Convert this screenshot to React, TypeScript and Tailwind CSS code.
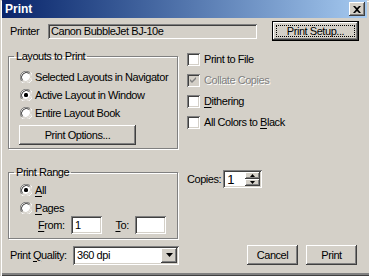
import React from "react";

const raised =
  "shadow-[inset_-1px_-1px_#404040,inset_1px_1px_#ffffff,inset_-2px_-2px_#808080,inset_2px_2px_#d4d0c8]";
const sunken =
  "shadow-[inset_1px_1px_#808080,inset_-1px_-1px_#ffffff,inset_2px_2px_#404040,inset_-2px_-2px_#d4d0c8]";

function U({ children }: { children: React.ReactNode }) {
  return <span className="underline underline-offset-[2px]">{children}</span>;
}

function Radio({ checked }: { checked?: boolean }) {
  return (
    <svg width="12" height="12" viewBox="0 0 12 12" className="shrink-0">
      <circle cx="6" cy="6" r="5" fill="#ffffff" />
      <path d="M1.76 10.24 A6 6 0 0 1 10.24 1.76" stroke="#808080" fill="none" strokeWidth="1" />
      <path d="M10.6 1.4 A6.2 6.2 0 0 1 1.4 10.6" stroke="#ffffff" fill="none" strokeWidth="1" />
      <path d="M2.5 9.5 A5 5 0 0 1 9.5 2.5" stroke="#404040" fill="none" strokeWidth="1" />
      <path d="M9.5 2.5 A5 5 0 0 1 2.5 9.5" stroke="#d4d0c8" fill="none" strokeWidth="1" />
      {checked && <rect x="4" y="4" width="4" height="4" rx="1.5" fill="#000000" />}
    </svg>
  );
}

function Check({ checked, disabled }: { checked?: boolean; disabled?: boolean }) {
  return (
    <div
      className={`w-[13px] h-[13px] shrink-0 ${sunken} ${disabled ? "bg-[#d4d0c8]" : "bg-white"} flex items-center justify-center`}
    >
      {checked && (
        <svg width="7" height="7" viewBox="0 0 7 7">
          <path d="M0 2 L2 4 L6 0 L6 2 L2 6 L0 4 Z" fill={disabled ? "#808080" : "#000000"} />
        </svg>
      )}
    </div>
  );
}

function Button({ children, w, def }: { children: React.ReactNode; w: string; def?: boolean }) {
  if (def) {
    return (
      <div className={`${w} h-[20px] border border-black bg-[#d4d0c8] flex`}>
        <div className={`flex-1 ${raised} flex items-center justify-center p-[3px]`}>
          <div className="w-full h-full border border-dotted border-black flex items-center justify-center">
            {children}
          </div>
        </div>
      </div>
    );
  }
  return (
    <div className={`${w} h-[20px] ${raised} bg-[#d4d0c8] flex items-center justify-center`}>{children}</div>
  );
}

export default function App() {
  return (
    <div className="w-[369px] h-[276px] bg-[#d4d0c8] font-['Liberation_Sans',Arial,sans-serif] text-[11px] leading-[13px] tracking-[-0.45px] whitespace-nowrap text-black shadow-[inset_1px_1px_#d4d0c8,inset_2px_2px_#ffffff,inset_0_-1px_#404040,inset_0_-3px_#808080] overflow-hidden flex flex-col">
      {/* title bar */}
      <div className="h-[18px] mx-[2px] bg-gradient-to-r from-[#0a246a] to-[#a6caf0] flex items-center justify-between pl-[3px] pr-[2px]">
        <span className="text-white font-bold text-[12px] leading-[14px] tracking-normal">Print</span>
        <div className={`w-[16px] h-[14px] bg-[#d4d0c8] ${raised} flex items-center justify-center`}>
          <svg width="8" height="7" viewBox="0 0 8 7">
            <path d="M0 0 L2 0 L4 2 L6 0 L8 0 L5 3.5 L8 7 L6 7 L4 5 L2 7 L0 7 L3 3.5 Z" fill="#000" />
          </svg>
        </div>
      </div>

      {/* printer row */}
      <div className="flex items-center mt-[3px] h-[20px]">
        <span className="ml-[10px] w-[38px]">Printer</span>
        <div className={`w-[209px] h-[15px] ${sunken} bg-[#d4d0c8] flex items-center px-[3px]`}>
          Canon BubbleJet BJ-10e
        </div>
        <div className="ml-[15px]">
          <Button w="w-[87px]" def>
            Print Setup...
          </Button>
        </div>
      </div>

      {/* main */}
      <div className="flex mt-[9px]">
        <div className="ml-[8px] w-[170px] flex flex-col">
          <fieldset className="min-w-0 h-[99px] border border-[#808080] shadow-[inset_1px_1px_#ffffff,1px_1px_#ffffff] px-[11px]">
            <legend className="px-[2px] ml-[-6px] leading-[13px]">Layouts to Print</legend>
            <div className="flex flex-col gap-[6px] mt-[8px]">
              <div className="flex items-center gap-[2px] h-[12px]">
                <Radio />
                <span className="ml-[1px]">Selected Layouts in Navigator</span>
              </div>
              <div className="flex items-center gap-[2px] h-[12px]">
                <Radio checked />
                <span className="ml-[1px]">Active Layout in Window</span>
              </div>
              <div className="flex items-center gap-[2px] h-[12px]">
                <Radio />
                <span className="ml-[1px]">Entire Layout Book</span>
              </div>
            </div>
            <div className="mt-[6px] -ml-[1px]">
              <Button w="w-[117px]">Print Options...</Button>
            </div>
          </fieldset>

          <fieldset className="min-w-0 mt-[17px] h-[73px] border border-[#808080] shadow-[inset_1px_1px_#ffffff,1px_1px_#ffffff] px-[11px]">
            <legend className="px-[2px] ml-[-6px] leading-[13px]">Print Range</legend>
            <div className="flex flex-col gap-[6px] mt-[5px]">
              <div className="flex items-center gap-[2px] h-[12px]">
                <Radio checked />
                <span className="ml-[1px]">
                  <U>A</U>ll
                </span>
              </div>
              <div className="flex items-center gap-[2px] h-[12px]">
                <Radio />
                <span className="ml-[1px]">
                  <U>P</U>ages
                </span>
              </div>
            </div>
            <div className="flex items-center mt-[2px] h-[18px]">
              <span className="ml-[18px] w-[34px]">
                <U>F</U>rom:
              </span>
              <div className={`w-[32px] h-[18px] bg-white ${sunken} flex items-center px-[4px]`}>1</div>
              <span className="ml-[13px] w-[20px]">
                <U>T</U>o:
              </span>
              <div className={`w-[32px] h-[18px] bg-white ${sunken}`}></div>
            </div>
          </fieldset>
        </div>

        <div className="ml-[9px] flex flex-col">
          <div className="flex flex-col gap-[8px] mt-[3px]">
            <div className="flex items-center gap-[4px]">
              <Check />
              <span>Print to File</span>
            </div>
            <div className="flex items-center gap-[4px]">
              <Check checked disabled />
              <span className="text-[#808080] [text-shadow:1px_1px_#ffffff]">Collate Copies</span>
            </div>
            <div className="flex items-center gap-[4px]">
              <Check />
              <span>
                <U>D</U>ithering
              </span>
            </div>
            <div className="flex items-center gap-[4px]">
              <Check />
              <span>
                All Colors to <U>B</U>lack
              </span>
            </div>
          </div>
          <div className="flex items-center mt-[41px]">
            <span>Copies:</span>
            <div className={`ml-[2px] w-[39px] h-[18px] bg-white ${sunken} flex items-center pl-[4px] pr-[2px] justify-between`}>
              <span className="text-[13px]">1</span>
              <div className="flex flex-col">
                <div className={`w-[15px] h-[7px] bg-[#d4d0c8] ${raised} flex items-center justify-center`}>
                  <svg width="5" height="3" viewBox="0 0 5 3">
                    <path d="M2.5 0 L5 3 L0 3 Z" fill="#000" />
                  </svg>
                </div>
                <div className={`w-[15px] h-[7px] bg-[#d4d0c8] ${raised} flex items-center justify-center`}>
                  <svg width="5" height="3" viewBox="0 0 5 3">
                    <path d="M0 0 L5 0 L2.5 3 Z" fill="#000" />
                  </svg>
                </div>
              </div>
            </div>
          </div>
        </div>
      </div>

      {/* bottom row */}
      <div className="flex items-center mt-[6px] h-[20px]">
        <span className="ml-[10px] w-[63px]">
          Print <U>Q</U>uality:
        </span>
        <div className={`w-[106px] h-[19px] bg-white ${sunken} flex items-center pl-[4px] pr-[2px] justify-between`}>
          <span>360 dpi</span>
          <div className={`w-[16px] h-[15px] bg-[#d4d0c8] ${raised} flex items-center justify-center`}>
            <svg width="7" height="4" viewBox="0 0 7 4">
              <path d="M0 0 L7 0 L3.5 4 Z" fill="#000" />
            </svg>
          </div>
        </div>
        <div className="ml-[68px]">
          <Button w="w-[51px]">Cancel</Button>
        </div>
        <div className="ml-[8px]">
          <Button w="w-[51px]">Print</Button>
        </div>
      </div>
    </div>
  );
}
